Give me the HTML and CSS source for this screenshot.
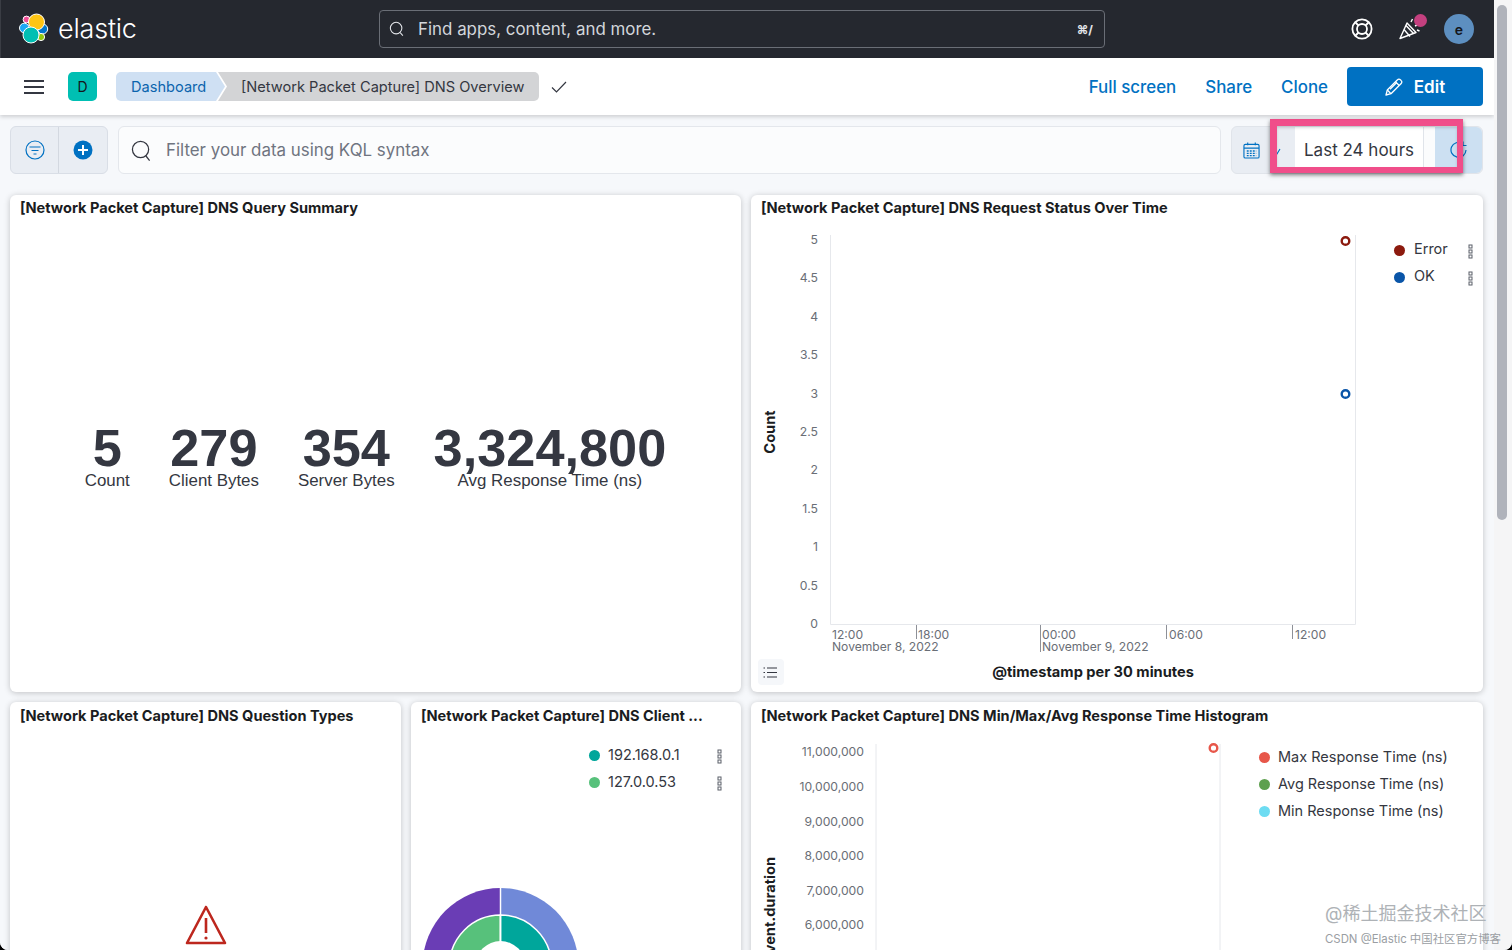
FILE: index.html
```html
<!DOCTYPE html>
<html lang="en">
<head>
<meta charset="utf-8">
<title>[Network Packet Capture] DNS Overview - Elastic</title>
<link rel="stylesheet" href="styles.css">
</head>
<body>
<svg class="defs" width="0" height="0" aria-hidden="true">
  <symbol id="kebab" viewBox="0 0 5 15">
    <rect x="1" y="1" width="3" height="3" fill="none" stroke="#5a5f69"/>
    <rect x="1" y="6" width="3" height="3" fill="none" stroke="#5a5f69"/>
    <rect x="1" y="11" width="3" height="3" fill="none" stroke="#5a5f69"/>
  </symbol>
</svg>
<div class="window">
  <div class="app">
    <header class="topbar">
      <div class="brand">
        <svg class="logo" viewBox="18 12 34 34" width="34" height="34">
          <g stroke="#fff" stroke-width="1">
            <circle cx="26.5" cy="19.5" r="3.4" fill="#f04e98"/>
            <circle cx="24.3" cy="28" r="4.8" fill="#1ba9f5"/>
            <circle cx="42.7" cy="29" r="5" fill="#0077cc"/>
            <circle cx="41" cy="37" r="3.6" fill="#93c90e"/>
            <circle cx="36.5" cy="22" r="8" fill="#fec514"/>
            <circle cx="31" cy="35" r="8" fill="#00bfb3"/>
          </g>
        </svg>
        <span class="wordmark">elastic</span>
      </div>
      <div class="global-search">
        <svg class="ico" viewBox="0 0 18 18" width="16" height="16"><circle cx="8" cy="8" r="6.5" fill="none" stroke="#e4e6ea" stroke-width="1.2"/><path d="M12.6 13l3 3.5" stroke="#e4e6ea" stroke-width="1.2" fill="none"/></svg>
        <span class="gs-text">Find apps, content, and more.</span>
        <span class="gs-key">⌘/</span>
      </div>
      <div class="top-icons">
        <svg class="ti-help" viewBox="0 0 24 24" width="24" height="24"><g fill="none" stroke="#fff" stroke-width="1.8"><circle cx="12" cy="12" r="9.6"/><circle cx="12" cy="12" r="5"/><path d="M5.5 5.5l3 3M18.5 5.5l-3 3M5.5 18.5l3-3M18.5 18.5l-3-3"/></g></svg>
        <span class="party">
          <svg viewBox="0 0 24 24" width="24" height="24"><g fill="none" stroke="#fff" stroke-width="1.4" stroke-linejoin="round"><path d="M2 21.5L9 6l9 9.5z"/><path d="M6 12.5l6 7M8 8.5l7.5 8"/><path d="M13 5l1.5-3M17 9l3-1.5M19 13l2.5 1"/></g></svg>
          <i class="party-dot"></i>
        </span>
        <span class="avatar">e</span>
      </div>
    </header>

    <nav class="subbar">
      <button class="burger" aria-label="Menu"><i></i><i></i><i></i></button>
      <span class="space-badge">D</span>
      <div class="crumbs">
        <span class="crumb crumb-link">Dashboard</span>
        <span class="crumb crumb-current">[Network Packet Capture] DNS Overview</span>
      </div>
      <svg class="crumb-check" viewBox="0 0 16 12" width="16" height="12"><path d="M1 6.5l4.5 4.5L15 1" fill="none" stroke="#343741" stroke-width="1.2"/></svg>
      <div class="actions">
        <a class="action">Full screen</a>
        <a class="action">Share</a>
        <a class="action">Clone</a>
        <button class="edit">
          <svg viewBox="0 0 18 18" width="18" height="18"><g fill="none" stroke="#fff" stroke-width="1.3" stroke-linejoin="round"><path d="M1 17l1.3-5L12.5 1.8a2 2 0 0 1 2.9 0l.8.8a2 2 0 0 1 0 2.9L6 15.7z"/><path d="M2.3 12L6 15.7M10.5 3.8l3.7 3.7M5 11.3l7-7"/></g></svg>
          Edit
        </button>
      </div>
    </nav>

    <section class="querybar">
      <div class="filter-btns">
        <span class="fbtn">
          <svg viewBox="0 0 20 20" width="20" height="20"><g fill="none" stroke="#0071c2" stroke-width="1.2"><circle cx="10" cy="10" r="9"/><path d="M4.5 7h11M6.5 10.5h7M8.5 14h3"/></g></svg>
        </span>
        <span class="fbtn fbtn-last">
          <svg viewBox="0 0 20 20" width="20" height="20"><circle cx="10" cy="10" r="9.5" fill="#0071c2"/><path d="M10 5v10M5 10h10" stroke="#fff" stroke-width="2"/></svg>
        </span>
      </div>
      <div class="kql">
        <svg viewBox="0 0 22 22" width="21" height="21"><circle cx="10" cy="10" r="8.5" fill="none" stroke="#343741" stroke-width="1.3"/><path d="M15.5 16.5l4 5" stroke="#343741" stroke-width="1.3"/></svg>
        <span>Filter your data using KQL syntax</span>
      </div>
      <div class="datepick">
        <span class="dp-cal">
          <svg viewBox="0 0 18 18" width="17" height="17"><g fill="none" stroke="#0071c2" stroke-width="1.2"><rect x="1" y="2.5" width="16" height="14.5" rx="1.5"/><path d="M1 6.5h16M5 .5v3M13 .5v3"/><path d="M4 9.5h10M4 12h10M4 14.5h10" stroke-dasharray="2 1.2" stroke-width="1.4"/></g></svg>
          <svg class="dp-tick" viewBox="0 0 8 8" width="8" height="8"><path d="M1 6l2 1.5L7 1" fill="none" stroke="#0071c2" stroke-width="1.1"/></svg>
        </span>
        <span class="dp-text">Last 24 hours</span>
        <span class="dp-gap"></span>
        <span class="dp-refresh">
          <svg viewBox="0 0 18 18" width="18" height="18"><path d="M12.5 2.5A7.5 7.5 0 1 0 16 9M13 .5v4h3.5" fill="none" stroke="#0071c2" stroke-width="1.2"/></svg>
        </span>
        <div class="highlight"></div>
      </div>
    </section>

    <main class="grid">
      <article class="panel">
        <h2 class="ptitle">[Network Packet Capture] DNS Query Summary</h2>
        <div class="metrics">
          <div class="metric"><b>5</b><span>Count</span></div>
          <div class="metric"><b>279</b><span>Client Bytes</span></div>
          <div class="metric"><b>354</b><span>Server Bytes</span></div>
          <div class="metric"><b>3,324,800</b><span>Avg Response Time (ns)</span></div>
        </div>
      </article>

      <article class="panel">
        <h2 class="ptitle">[Network Packet Capture] DNS Request Status Over Time</h2>
        <div class="chartbody">
          <svg class="chart" viewBox="751 221 610 471" width="610" height="471">
            <path class="gridline" d="M830.5 235V624.5H1355.5V235"/>
            <g class="ytick" text-anchor="end">
              <text x="818" y="244">5</text><text x="818" y="282">4.5</text><text x="818" y="321">4</text><text x="818" y="359">3.5</text><text x="818" y="398">3</text><text x="818" y="436">2.5</text><text x="818" y="474">2</text><text x="818" y="513">1.5</text><text x="818" y="551">1</text><text x="818" y="590">0.5</text><text x="818" y="628">0</text>
            </g>
            <path class="axistick" d="M916.5 625v14M1040.5 625v27M1166.5 625v14M1292.5 625v14"/>
            <g class="xtick">
              <text x="832" y="639">12:00</text><text x="832" y="651">November 8, 2022</text>
              <text x="918" y="639">18:00</text>
              <text x="1042" y="639">00:00</text><text x="1042" y="651">November 9, 2022</text>
              <text x="1169" y="639">06:00</text>
              <text x="1295" y="639">12:00</text>
            </g>
            <text class="axistitle" transform="translate(775 432) rotate(-90)" text-anchor="middle">Count</text>
            <text class="axistitle" x="1093" y="677" text-anchor="middle">@timestamp per 30 minutes</text>
            <circle cx="1345.5" cy="241" r="3.8" fill="#fff" stroke="#8c1a0e" stroke-width="2.4"/>
            <circle cx="1345.5" cy="394" r="3.8" fill="#fff" stroke="#0a55a8" stroke-width="2.4"/>
            <rect x="758" y="659" width="26" height="26" rx="4" fill="#f5f7fa"/>
            <g stroke="#343741" stroke-width="1.2"><path d="M763.5 668h1.5M767 668h10M763.5 672.5h1.5M767 672.5h10M763.5 677h1.5M767 677h10"/></g>
          </svg>
          <ul class="legend legend-status">
            <li><i class="dot" style="background:#8c1a0e"></i><span>Error</span><svg class="kebab"><use href="#kebab"/></svg></li>
            <li><i class="dot" style="background:#0a55a8"></i><span>OK</span><svg class="kebab"><use href="#kebab"/></svg></li>
          </ul>
        </div>
      </article>

      <div class="lower-left">
        <article class="panel">
          <h2 class="ptitle">[Network Packet Capture] DNS Question Types</h2>
          <div class="warnbox">
            <svg viewBox="0 0 42 40" width="42" height="40"><g fill="none" stroke="#bd271e" stroke-width="2.6" stroke-linejoin="round"><path d="M21 2L2 38h38z"/><path d="M21 13v15"/></g><circle cx="21" cy="33" r="1.6" fill="#bd271e"/></svg>
          </div>
        </article>
        <article class="panel">
          <h2 class="ptitle">[Network Packet Capture] DNS Client ...</h2>
          <ul class="legend legend-client">
            <li><i class="dot" style="background:#00a69b"></i><span>192.168.0.1</span><svg class="kebab"><use href="#kebab"/></svg></li>
            <li><i class="dot" style="background:#57c17b"></i><span>127.0.0.53</span><svg class="kebab"><use href="#kebab"/></svg></li>
          </ul>
          <svg class="pie" viewBox="411 795 330 180" width="330" height="180">
            <path d="M500.5 888A78 78 0 0 0 422.5 966H500.5z" fill="#6a3db5"/>
            <path d="M500.5 888A78 78 0 0 1 578.5 966H500.5z" fill="#7089d8"/>
            <path d="M500.5 915A51 51 0 0 0 449.5 966H500.5z" fill="#57c17b" stroke="#fff" stroke-width="1.5"/>
            <path d="M500.5 915A51 51 0 0 1 551.5 966H500.5z" fill="#00a69b" stroke="#fff" stroke-width="1.5"/>
            <circle cx="500.5" cy="966" r="25" fill="#fff"/>
            <path d="M500.5 888V966" stroke="#fff" stroke-width="1.5"/>
          </svg>
        </article>
      </div>

      <article class="panel panel-hist">
        <h2 class="ptitle">[Network Packet Capture] DNS Min/Max/Avg Response Time Histogram</h2>
        <div class="chartbody">
          <svg class="chart" viewBox="751 729 490 240" width="490" height="240">
            <path class="gridline" d="M876 745V969M1220 745V969"/>
            <g class="ytick" text-anchor="end">
              <text x="864" y="757">11,000,000</text><text x="864" y="792">10,000,000</text><text x="864" y="827">9,000,000</text><text x="864" y="861">8,000,000</text><text x="864" y="896">7,000,000</text><text x="864" y="930">6,000,000</text>
            </g>
            <text class="axistitle" transform="translate(775 858) rotate(-90)" text-anchor="end">event.duration</text>
            <circle cx="1213.5" cy="749" r="3.8" fill="#fff" stroke="#e7574a" stroke-width="2.4"/>
          </svg>
          <ul class="legend legend-hist">
            <li><i class="dot" style="background:#e7574a"></i><span>Max Response Time (ns)</span></li>
            <li><i class="dot" style="background:#5ea04f"></i><span>Avg Response Time (ns)</span></li>
            <li><i class="dot" style="background:#6ddcf2"></i><span>Min Response Time (ns)</span></li>
          </ul>
        </div>
      </article>
    </main>
  </div>
  <div class="scrolltrack"><div class="scrollthumb"></div></div>
  <div class="watermark">
    <span class="wm-big">@稀土掘金技术社区</span>
    <span class="wm-small">CSDN @Elastic 中国社区官方博客</span>
  </div>
</div>
</body>
</html>
```

FILE: styles.css
```css
* { box-sizing: border-box; }
html, body { margin: 0; padding: 0; height: 100%; background: #000; overflow: hidden; }
body { font-family: Inter, "Noto Sans CJK SC", sans-serif; color: #343741; }
.defs { position: absolute; }
.window { position: relative; display: flex; width: 1512px; height: 950px; overflow: hidden; border-radius: 0 0 8px 8px; background: #f5f7fa; }
.app { position: relative; width: 1494px; height: 950px; display: flex; flex-direction: column; overflow: hidden; background: #f6f8fb; }

.topbar { display: flex; align-items: center; height: 58px; background: #25282f; flex: none; padding-left: 17px; border-left: 1px solid #3a3d44; }
.brand { display: flex; align-items: center; gap: 6px; width: 361px; }
.logo { flex: none; }
.wordmark { color: #fff; font-size: 27px; font-weight: 300; letter-spacing: -0.2px; margin-top: -1px; }
.global-search { display: flex; align-items: center; width: 726px; height: 38px; border: 1px solid #6a6e76; border-radius: 4px; padding: 0 11px 0 9px; color: #d3d6db; }
.gs-text { margin-left: 13px; font-size: 16.9px; flex: 1; }
.gs-key { font-size: 12px; font-weight: 700; color: #e4e6ea; }
.top-icons { display: flex; align-items: center; margin-left: auto; padding-right: 20px; gap: 22px; }
.top-icons svg { display: block; }
.ti-help { margin-right: 2px; }
.party { position: relative; display: block; }
.party-dot { position: absolute; left: 16px; top: -3px; width: 13px; height: 13px; border-radius: 50%; background: #c4407f; }
.avatar { width: 30px; height: 30px; border-radius: 50%; background: #5d8fc0; color: #14161a; font-size: 14px; font-weight: 600; display: flex; align-items: center; justify-content: center; }

.subbar { position: relative; z-index: 2; flex: none; display: flex; align-items: center; height: 57px; background: #fff; box-shadow: 0 2px 4px rgba(0,0,0,.16); padding: 0 11px 0 24px; }
.burger { width: 20px; height: 14px; padding: 0; border: 0; background: none; display: flex; flex-direction: column; justify-content: space-between; }
.burger i { display: block; height: 2px; background: #343741; }
.space-badge { margin-left: 24px; width: 29px; height: 29px; border-radius: 5px; background: #00bfb3; color: #14161a; font-size: 14px; display: flex; align-items: center; justify-content: center; }
.crumbs { display: flex; margin-left: 19px; height: 29px; }
.crumb { display: flex; align-items: center; font-size: 14.6px; }
.crumb-link { position: relative; z-index: 1; width: 109px; padding-left: 15px; background: #cfe0f3; color: #0b64ad; border-radius: 5px 0 0 5px; clip-path: polygon(0 0, 100px 0, 109px 50%, 100px 100%, 0 100%); }
.crumb-current { width: 321px; margin-left: -7px; padding-left: 23px; background: #d3d4d6; color: #343741; border-radius: 0 5px 5px 0; clip-path: polygon(0 0, 100% 0, 100% 100%, 0 100%, 9px 50%); }
.crumb-check { margin-left: 12px; }
.actions { display: flex; align-items: center; margin-left: auto; }
.action { color: #0071c2; font-size: 16.9px; font-weight: 500; margin-right: 29px; }
.action:nth-child(3) { margin-right: 19px; }
.edit { display: flex; align-items: center; justify-content: center; gap: 11px; width: 136px; height: 39px; border: 0; border-radius: 4px; background: #0071c2; color: #fff; font: 600 17px Inter, sans-serif; }

.querybar { flex: none; display: flex; align-items: center; height: 69px; padding: 11px 11px 10px 10px; gap: 10px; }
.querybar > * { height: 48px; }
.filter-btns { display: flex; width: 98px; background: #e9edf3; border: 1px solid #d9dee6; border-radius: 6px; flex: none; }
.fbtn { width: 47px; flex: none; display: flex; align-items: center; justify-content: center; }
.fbtn-last { width: 48px; border-left: 1px solid #d3d8e0; }
.kql { flex: 1; display: flex; align-items: center; gap: 14px; padding-left: 12px; background: #fbfcfd; border: 1px solid #e4e7ec; border-radius: 6px; color: #6f7480; font-size: 16.9px; }
.datepick { position: relative; display: flex; width: 252px; flex: none; background: #e9edf3; border: 1px solid #e0e4ea; border-radius: 6px; }
.dp-cal { display: flex; align-items: center; width: 63px; padding-left: 11px; gap: 13px; }
.dp-tick { margin-top: 3px; flex: none; }
.dp-text { display: flex; align-items: center; width: 129px; padding-left: 9px; background: #fff; font-size: 17px; color: #343741; border-right: 1px solid #e0e4ea; }
.dp-gap { width: 11px; background: #fbfcfd; }
.dp-refresh { flex: 1; display: flex; align-items: center; padding-left: 15px; background: #cce0f2; border-radius: 0 6px 6px 0; }
.highlight { position: absolute; left: 38px; top: -8px; width: 193px; height: 54px; border: solid #f04e8a; border-width: 7px 6px 6px 7px; box-shadow: 0 2px 4px rgba(0,0,0,.5), inset 0 2px 3px rgba(0,0,0,.15); }

.grid { display: grid; grid-template-columns: 731px 732px; grid-template-rows: 497px 500px; gap: 10px; padding: 11px 11px 0 10px; flex: none; }
.lower-left { display: grid; grid-template-columns: 391px 330px; gap: 10px; }
.panel { display: flex; flex-direction: column; background: #fff; border-radius: 6px; box-shadow: 0 1px 6px rgba(0,0,0,.22); overflow: hidden; }
.ptitle { margin: 0; flex: none; height: 26px; padding: 5px 10px 0; font-size: 14.55px; line-height: 17px; font-weight: 700; color: #1a1c21; white-space: nowrap; }
.lower-left .ptitle, .panel-hist .ptitle { padding-top: 6px; }

.metrics { flex: 1; display: flex; justify-content: center; align-items: center; gap: 39px; padding-top: 2px; font-family: "Liberation Sans", Arial, sans-serif; }
.metric { display: flex; flex-direction: column; align-items: center; }
.metric b { font-size: 52.3px; line-height: 46px; color: #343741; }
.metric span { font-size: 16.9px; line-height: 18px; margin-top: 1px; }

.chartbody { flex: 1; display: flex; min-height: 0; }
.chart { display: block; flex: none; }
.gridline { fill: none; stroke: #e6e8ec; stroke-width: 1; }
.axistick { fill: none; stroke: #8d9097; stroke-width: 1; }
.ytick text { font-size: 12.2px; fill: #6a6e76; }
.xtick text { font-size: 12.1px; fill: #6a6e76; }
.axistitle { font-size: 14.6px; font-weight: 700; fill: #1a1c21; }

.legend { list-style: none; margin: 0; padding: 15px 0 0; font-size: 14.5px; color: #343741; flex: 1; }
.legend li { display: flex; align-items: center; height: 27px; }
.dot { flex: none; width: 11px; height: 11px; border-radius: 50%; margin-right: 9px; margin-top: 2px; }
.kebab { width: 5px; height: 15px; margin-left: auto; margin-top: 3px; }
.legend-status { padding-left: 33px; padding-right: 10px; padding-top: 14px; }
.legend-status .dot { margin-top: 4px; }
.legend-status .kebab { margin-top: 5px; }
.legend-client { flex: none; padding: 13px 19px 0 178px; }
.legend-hist { padding-left: 18px; }
.legend-client .dot, .legend-hist .dot { margin-right: 8px; }

.warnbox { display: flex; justify-content: center; padding-top: 177px; }
.pie { display: block; flex: none; }

.watermark { position: absolute; left: 1325px; top: 903px; display: flex; flex-direction: column; gap: 7px; white-space: nowrap; pointer-events: none; }
.wm-big { font-size: 18px; line-height: 22px; color: #aeb2b6; }
.wm-small { font-size: 11.4px; line-height: 14px; color: #9a9ea3; }

.scrolltrack { flex: 1; padding: 5px 5px 0 3px; background: #f5f5f6; }
.scrollthumb { height: 515px; border-radius: 5px; background: #b0b3bb; }
```
